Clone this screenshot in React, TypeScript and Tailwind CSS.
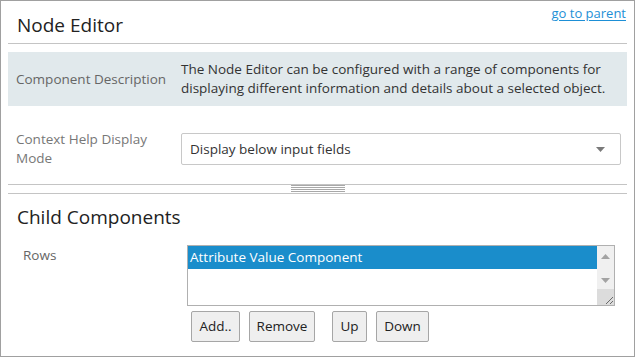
import { useState } from 'react';

const font = { fontFamily: '"Open Sans", "Noto Sans", sans-serif' };

function Triangle({ dir, className }: { dir: 'up' | 'down'; className?: string }) {
    return (
        <svg width="9" height="5" viewBox="0 0 9 5" className={className}>
            {dir === 'up' ? <path d="M0 5 L4.5 0 L9 5 Z" fill="currentColor" /> : <path d="M0 0 L9 0 L4.5 5 Z" fill="currentColor" />}
        </svg>
    );
}

export default function App() {
    const [selected] = useState(0);
    const rows = ['Attribute Value Component'];

    return (
        <div style={font} className="w-[635px] h-[357px] border border-[#a0a0a0] bg-white text-[#333] overflow-hidden">
            <div className="px-[7px]">
                <div className="h-[42px] flex justify-between border-b border-[#c4c4c4] box-content">
                    <h1 className="pl-[9px] pt-[11px] text-[19px] leading-[26px] text-[#222]">Node Editor</h1>
                    <a href="#" className="pt-[4px] pr-[1px] text-[13px] leading-[16px] text-[#1d8fd6] underline underline-offset-2">go to parent</a>
                </div>

                <div className="mt-[8px] h-[54px] bg-[#e1e9ec] flex">
                    <div className="w-[173px] pl-[8px] flex items-center whitespace-nowrap text-[13.5px] text-[#666]">Component Description</div>
                    <div className="flex-1 py-[8px] text-[13.5px] leading-[19px] text-[#333]">
                        The Node Editor can be configured with a range of components for displaying different information and details about a selected object.
                    </div>
                </div>

                <div className="mt-[24px] flex">
                    <div className="w-[173px] pl-[8px] pr-[20px] text-[13.5px] leading-[19px] text-[#777]">Context Help Display Mode</div>
                    <div className="mt-[3px] w-[440px] h-[32px] border border-[#c8c8c8] rounded-[2px] flex items-center justify-between pl-[8px] pr-[15px] text-[13.5px] text-[#333]">
                        <span>Display below input fields</span>
                        <Triangle dir="down" className="text-[#7a7a7a]" />
                    </div>
                </div>

                <div className="mt-[16px] h-[10px] border-y border-[#c4c4c4] flex justify-center">
                    <div className="w-[54px] flex flex-col gap-[1px]">
                        <div className="h-[1px] bg-[#a8a8a8]" />
                        <div className="h-[1px] bg-[#a8a8a8]" />
                        <div className="h-[1px] bg-[#a8a8a8]" />
                        <div className="h-[1px] bg-[#a8a8a8]" />
                    </div>
                </div>

                <h2 className="mt-[9px] pl-[9px] text-[19px] leading-[28px] text-[#222]">Child Components</h2>

                <div className="mt-[14px] flex">
                    <div className="w-[179px] pl-[15px] text-[13.5px] leading-[20px] text-[#666]">Rows</div>
                    <div className="w-[428px] h-[61px] border border-[#b0b0b0] flex">
                        <div className="flex-1">
                            {rows.map((r, i) => (
                                <div key={r} className={`h-[23px] pl-[2px] flex items-center text-[13.5px] ${i === selected ? 'bg-[#1a8dcb] text-white' : ''}`}>{r}</div>
                            ))}
                        </div>
                        <div className="w-[17px] bg-[#f0f0f0] flex flex-col">
                            <div className="h-[20px] flex items-center justify-center text-[#a3a3a3]">
                                <Triangle dir="up" />
                            </div>
                            <div className="flex-1 flex items-end justify-center pb-[6px] text-[#a3a3a3]">
                                <Triangle dir="down" />
                            </div>
                            <div className="h-[16px] bg-[#dcdcdc] flex items-end justify-end">
                                <svg width="10" height="10" viewBox="0 0 10 10">
                                    <path d="M2 9 L9 2 M6 9 L9 6" stroke="#6a6a6a" strokeWidth="1" />
                                </svg>
                            </div>
                        </div>
                    </div>
                </div>

                <div className="mt-[5px] ml-[183px] flex text-[13.5px] text-[#222]">
                    <button className="h-[31px] w-[49px] border border-[#a6a6a6] rounded-[2px] bg-[#efefef]">Add..</button>
                    <button className="ml-[9px] h-[31px] w-[66px] border border-[#a6a6a6] rounded-[2px] bg-[#efefef]">Remove</button>
                    <button className="ml-[17px] h-[31px] w-[35px] border border-[#a6a6a6] rounded-[2px] bg-[#efefef]">Up</button>
                    <button className="ml-[9px] h-[31px] w-[53px] border border-[#a6a6a6] rounded-[2px] bg-[#efefef]">Down</button>
                </div>
            </div>
        </div>
    );
}
